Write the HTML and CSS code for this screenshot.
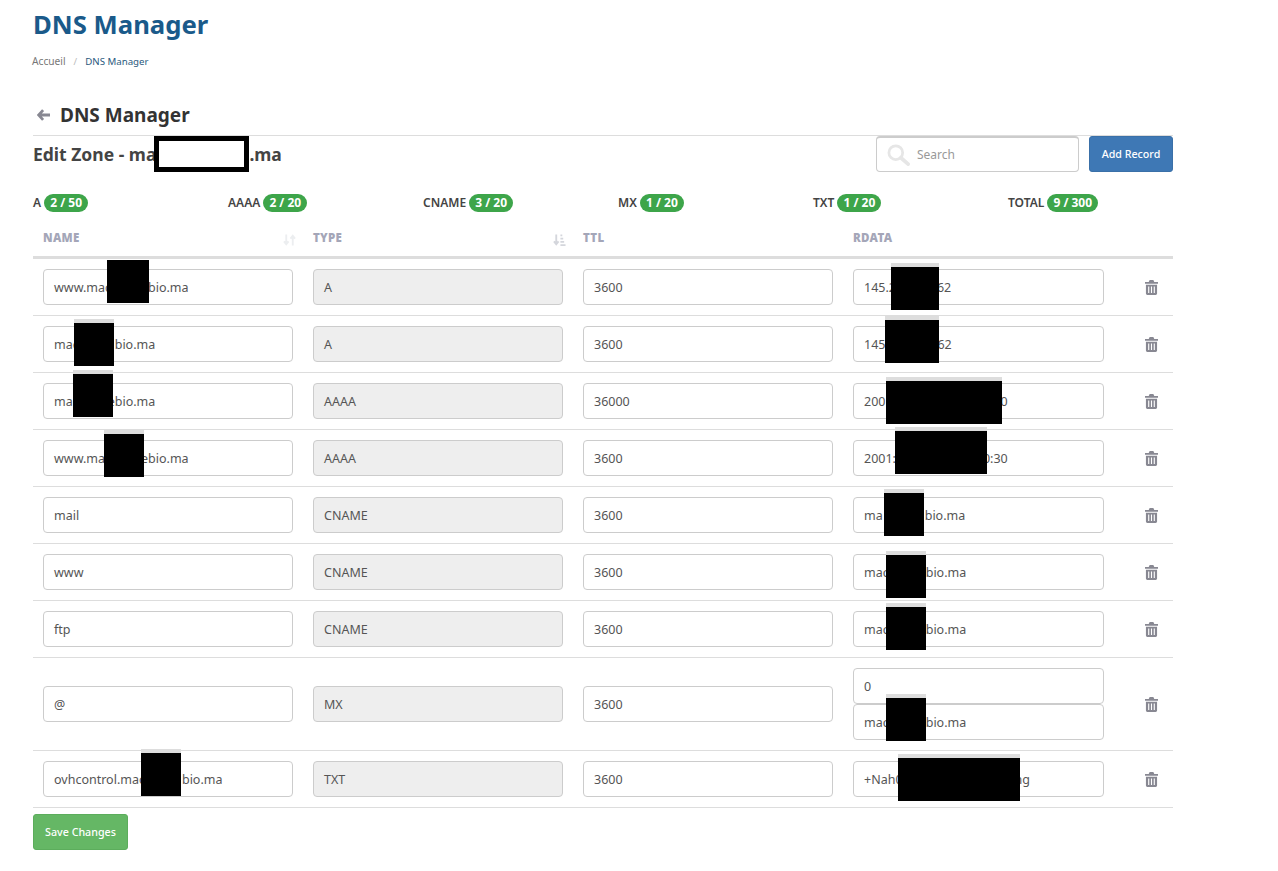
FILE: index.html
```html
<!DOCTYPE html>
<html lang="fr">
<head>
<meta charset="utf-8">
<title>DNS Manager</title>
<link rel="stylesheet" href="styles.css">
</head>
<body>
<main class="page">
  <header class="page-head">
    <h1 class="page-title">DNS Manager</h1>
    <nav class="crumbs"><span class="crumb-home">Accueil</span><span class="crumb-sep">/</span><span class="crumb-current">DNS Manager</span></nav>
  </header>
  <section class="panel">
    <h2 class="panel-title">
      <svg class="back-icon" viewBox="0 0 16 14"><path d="M7.500 1 2 7l5.500 6M3 7h13" fill="none" stroke="currentColor" stroke-width="3.400"/></svg>
      DNS Manager
    </h2>
    <div class="toolbar">
      <h3 class="zone-title">Edit Zone - ma<span class="zone-mask"></span>.ma</h3>
      <div class="toolbar-actions">
        <div class="search">
          <svg class="search-icon" viewBox="0 0 26 24"><circle cx="9.500" cy="9.500" r="7.500" fill="none" stroke="currentColor" stroke-width="3"/><path d="m15 15 8 7" stroke="currentColor" stroke-width="4" stroke-linecap="round"/></svg>
          <span class="search-text">Search</span>
        </div>
        <button class="btn btn-blue" type="button">Add Record</button>
      </div>
    </div>
    <div class="quotas">
      <div class="quota">A <span class="pill">2 / 50</span></div>
      <div class="quota">AAAA <span class="pill">2 / 20</span></div>
      <div class="quota">CNAME <span class="pill">3 / 20</span></div>
      <div class="quota">MX <span class="pill">1 / 20</span></div>
      <div class="quota">TXT <span class="pill">1 / 20</span></div>
      <div class="quota">TOTAL <span class="pill">9 / 300</span></div>
    </div>
    <div class="table">
      <div class="row head">
        <div class="cell">NAME<svg class="sort" viewBox="0 0 14 14"><path d="M3.500 1v10M1 8.500l2.500 3 2.500-3M10.500 13V3M8 5.500l2.500-3 2.500 3" fill="none" stroke="currentColor" stroke-width="2"/></svg></div>
        <div class="cell">TYPE<svg class="sort sort-dark" viewBox="0 0 14 14"><path d="M3.500 1v10M1 8.500l2.500 3 2.500-3" fill="none" stroke="currentColor" stroke-width="2"/><path d="M8 1h2v2H8zM8 4.500h3v2H8zM8 8h4v2H8zM8 11.500h5.500v2H8z" fill="currentColor"/></svg></div>
        <div class="cell">TTL</div>
        <div class="cell">RDATA</div>
        <div class="cell"></div>
      </div>
      <div class="row">
        <div class="cell"><div class="field">www.mac<span class="gap g11"></span>bio.ma<i class="mask n1"></i></div></div>
        <div class="cell"><div class="field off">A</div></div>
        <div class="cell"><div class="field">3600</div></div>
        <div class="cell"><div class="field">145.2<span class="gap g1"></span>62<i class="mask strip r1"></i></div></div>
        <div class="cell"><svg class="trash" viewBox="0 0 14 16"><use href="#trash"/></svg></div>
      </div>
      <div class="row">
        <div class="cell"><div class="field">mac<span class="gap g2"></span>bio.ma<i class="mask strip n2"></i></div></div>
        <div class="cell"><div class="field off">A</div></div>
        <div class="cell"><div class="field">3600</div></div>
        <div class="cell"><div class="field">145<span class="gap g3"></span>62<i class="mask strip r2"></i></div></div>
        <div class="cell"><svg class="trash" viewBox="0 0 14 16"><use href="#trash"/></svg></div>
      </div>
      <div class="row">
        <div class="cell"><div class="field">ma<span class="gap g4"></span>ebio.ma<i class="mask strip n3"></i></div></div>
        <div class="cell"><div class="field off">AAAA</div></div>
        <div class="cell"><div class="field">36000</div></div>
        <div class="cell"><div class="field">200<span class="gap g5"></span>0<i class="mask strip r3"></i></div></div>
        <div class="cell"><svg class="trash" viewBox="0 0 14 16"><use href="#trash"/></svg></div>
      </div>
      <div class="row">
        <div class="cell"><div class="field">www.ma<span class="gap g6"></span>ebio.ma<i class="mask strip n4"></i></div></div>
        <div class="cell"><div class="field off">AAAA</div></div>
        <div class="cell"><div class="field">3600</div></div>
        <div class="cell"><div class="field">2001:<span class="gap g7"></span>0:30<i class="mask strip r4"></i></div></div>
        <div class="cell"><svg class="trash" viewBox="0 0 14 16"><use href="#trash"/></svg></div>
      </div>
      <div class="row">
        <div class="cell"><div class="field">mail</div></div>
        <div class="cell"><div class="field off">CNAME</div></div>
        <div class="cell"><div class="field">3600</div></div>
        <div class="cell"><div class="field">ma<span class="gap g8"></span>bio.ma<i class="mask strip r5"></i></div></div>
        <div class="cell"><svg class="trash" viewBox="0 0 14 16"><use href="#trash"/></svg></div>
      </div>
      <div class="row">
        <div class="cell"><div class="field">www</div></div>
        <div class="cell"><div class="field off">CNAME</div></div>
        <div class="cell"><div class="field">3600</div></div>
        <div class="cell"><div class="field">mac<span class="gap g9"></span>bio.ma<i class="mask strip r6"></i></div></div>
        <div class="cell"><svg class="trash" viewBox="0 0 14 16"><use href="#trash"/></svg></div>
      </div>
      <div class="row">
        <div class="cell"><div class="field">ftp</div></div>
        <div class="cell"><div class="field off">CNAME</div></div>
        <div class="cell"><div class="field">3600</div></div>
        <div class="cell"><div class="field">mac<span class="gap g9"></span>bio.ma<i class="mask strip r7"></i></div></div>
        <div class="cell"><svg class="trash" viewBox="0 0 14 16"><use href="#trash"/></svg></div>
      </div>
      <div class="row">
        <div class="cell"><div class="field">@</div></div>
        <div class="cell"><div class="field off">MX</div></div>
        <div class="cell"><div class="field">3600</div></div>
        <div class="cell stack"><div class="field">0</div><div class="field">mac<span class="gap g9"></span>bio.ma<i class="mask strip r8"></i></div></div>
        <div class="cell"><svg class="trash" viewBox="0 0 14 16"><use href="#trash"/></svg></div>
      </div>
      <div class="row">
        <div class="cell"><div class="field">ovhcontrol.mac<span class="gap g9"></span>bio.ma<i class="mask strip n9"></i></div></div>
        <div class="cell"><div class="field off">TXT</div></div>
        <div class="cell"><div class="field">3600</div></div>
        <div class="cell"><div class="field">+Nah0<span class="gap g10"></span>ng<i class="mask strip r9"></i></div></div>
        <div class="cell"><svg class="trash" viewBox="0 0 14 16"><use href="#trash"/></svg></div>
      </div>
    </div>
    <button class="btn btn-green" type="button">Save Changes</button>
  </section>
</main>
<svg class="defs" aria-hidden="true"><symbol id="trash" viewBox="0 0 14 16"><path fill="currentColor" d="M5 0h4l1 2h4v2H0V2h4zM1 5h12v9.500a1.500 1.500 0 0 1-1.500 1.500h-9A1.500 1.500 0 0 1 1 14.500z"/><path stroke="#fff" stroke-width="1.200" d="M4 7v7M7 7v7M10 7v7"/></symbol></svg>
</body>
</html>
```
FILE: styles.css
```css
* { box-sizing: border-box; }
html, body { margin: 0; background: #fff; }
body { font-family: "Noto Sans", "Open Sans", sans-serif; color: #555; }
.page { width: 1140px; margin-left: 33px; }
.defs { display: none; }
.page-head { height: 96px; padding-top: 7px; }
.page-title { margin: 0; font-size: 25.700px; line-height: 36px; font-weight: 700; color: #1a5a8a; }
.crumbs { margin-top: 10px; margin-left: -1px; font-size: 9.700px; line-height: 16px; }
.crumb-home { color: #777; font-size: 10.200px; }
.crumb-sep { color: #bbb; margin: 0 8px; }
.crumb-current { color: #2a5a7e; }
.panel-title { margin: 0; height: 40px; display: flex; align-items: center; font-size: 19px; font-weight: 700; color: #333; border-bottom: 1px solid #ddd; padding: 0 0 2px 4px; gap: 10px; }
.back-icon { width: 13px; height: 12px; color: #888892; }
.toolbar { display: flex; justify-content: space-between; align-items: flex-start; height: 44px; }
.zone-title { margin: 0; font-size: 17.500px; line-height: 36px; font-weight: 700; color: #444; white-space: nowrap; }
.zone-mask { display: inline-block; width: 95px; height: 36px; border: 5px solid #000; background: #fff; vertical-align: middle; margin: -4px 0 0 -2px; }
.toolbar-actions { display: flex; gap: 10px; }
.search { width: 203px; height: 36px; border: 1px solid #ccc; border-top-width: 2px; border-radius: 4px; display: flex; align-items: center; padding-left: 10px; gap: 6px; }
.search-icon { width: 24px; height: 22px; color: #e6e6e6; }
.search-text { font-size: 12px; color: #999; }
.btn { border-radius: 3px; color: #fff; font-family: inherit; font-size: 10.700px; font-weight: 500; border: 1px solid; height: 36px; padding: 0; }
.btn-blue { width: 84px; background: #3e78b5; border-color: #3a70a8; }
.btn-green { width: 95px; background: #65b765; border-color: #5cad5c; margin-top: 6px; }
.quotas { display: grid; grid-template-columns: repeat(6, 195px); height: 42px; align-items: center; padding-top: 4px; font-size: 12px; font-weight: 600; color: #444; white-space: nowrap; }
.pill { display: inline-block; background: #3da54a; color: #fff; border-radius: 9px; height: 18px; line-height: 18px; padding: 0 6px; font-size: 12px; font-weight: 700; }
.row { display: grid; grid-template-columns: 270px 270px 270px 271px 59px; align-items: center; border-bottom: 1px solid #ddd; min-height: 57px; }
.row.head { min-height: 0; height: 37px; border-bottom: 3px solid #ddd; align-items: start; font-size: 11.500px; letter-spacing: 0.300px; font-weight: 900; color: #a4a6b8; }
.head .cell { display: flex; justify-content: space-between; padding: 8px 7px 0 10px; }
.sort { width: 13px; height: 14px; color: #eceef0; margin-top: 3px; }
.sort-dark { color: #d4d6dc; }
.cell { padding: 0 10px; }
.cell:last-child { padding: 0 0 0 31px; display: flex; }
.stack { display: flex; flex-direction: column; padding-top: 10px; padding-bottom: 10px; }
.field { position: relative; height: 36px; width: 100%; border: 1px solid #ccc; border-radius: 4px; padding: 0 10px; font-size: 12.500px; line-height: 36px; color: #555; white-space: nowrap; background: #fff; }
.off { background: #eee; }
.trash { width: 13px; height: 15px; color: #888892; }
.gap { display: inline-block; }
.g1 { width: 41px; } .g2 { width: 36px; } .g3 { width: 52px; } .g4 { width: 35px; } .g5 { width: 115px; } .g6 { width: 36px; } .g7 { width: 87px; } .g8 { width: 42px; } .g9 { width: 37px; } .g10 { width: 112px; } .g11 { width: 37px; }
.mask { position: absolute; background: #000; height: 43px; }
.strip { border-top: 4px solid #ddd; height: 47px; background-clip: padding-box; }
.n1 { left: 63px; top: -10px; width: 42px; }
.n2 { left: 30px; top: -8px; width: 40px; }
.n3 { left: 29px; top: -14px; width: 40px; }
.n4 { left: 60px; top: -11px; width: 40px; }
.n9 { left: 97px; top: -13px; width: 40px; }
.r1 { left: 37px; top: -7px; width: 48px; }
.r2 { left: 31px; top: -11px; width: 54px; }
.r3 { left: 32px; top: -7px; width: 116px; }
.r4 { left: 41px; top: -14px; width: 92px; }
.r5 { left: 30px; top: -9px; width: 40px; }
.r6 { left: 32px; top: -4px; width: 40px; }
.r7 { left: 32px; top: -9px; width: 40px; }
.r8 { left: 32px; top: -11px; width: 40px; }
.r9 { left: 44px; top: -8px; width: 122px; }
```
